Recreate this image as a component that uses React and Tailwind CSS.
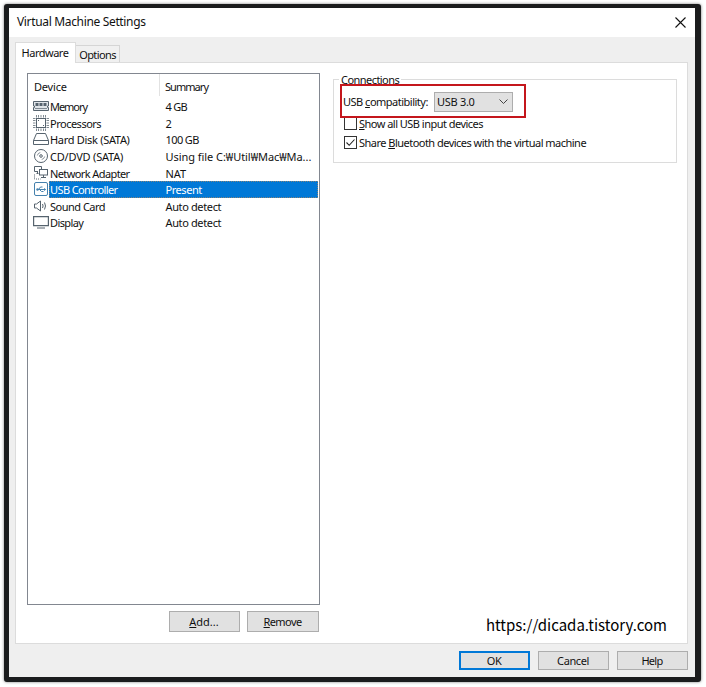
import { clsx } from "clsx";

const MemoryIcon = () => (
  <svg width="16" height="16" viewBox="0 0 16 16" fill="none" stroke="#56636e">
    <path d="M.5 3.500h15v4.500h-1v1.500h1v3H.5v-3h1V8h-1z" fill="#dfe4e8" />
    <path d="M2.500 5h3v3h-3zM6.500 5h3v3h-3zM10.500 5h3v3h-3z" fill="#56636e" stroke="none" />
    <path d="M2 10.500h12" strokeOpacity=".7" />
  </svg>
);

const ProcessorIcon = () => (
  <svg width="16" height="16" viewBox="0 0 16 16" fill="none" stroke="#56636e">
    <rect x="3.5" y="3.5" width="9" height="9" />
    <path d="M3.5 0v2.5M5.5 0v2.5M8 0v2.5M10.5 0v2.5M12.5 0v2.5M3.5 13.5V16M5.5 13.5V16M8 13.5V16M10.5 13.5V16M12.5 13.5V16" strokeOpacity=".75" />
    <path d="M0 3.5h2.5M0 5.5h2.5M0 8h2.5M0 10.5h2.5M0 12.5h2.5M13.5 3.5H16M13.5 5.5H16M13.5 8H16M13.5 10.5H16M13.5 12.5H16" strokeOpacity=".75" />
    <path d="M5 5.5h1M10 10.5h1" />
  </svg>
);

const DiskIcon = () => (
  <svg width="16" height="16" viewBox="0 0 16 16" fill="none" stroke="#56636e">
    <path d="M3.5 2.5h9l3 7v4H.5v-4zM.5 9.5h15" />
  </svg>
);

const DiscIcon = () => (
  <svg width="16" height="16" viewBox="0 0 16 16" fill="none" stroke="#56636e">
    <circle cx="8" cy="8" r="6.5" />
    <circle cx="8" cy="8" r="1.3" />
    <path d="M4.3 7.5a4 4 0 0 1 3-3M11.7 8.5a4 4 0 0 1-3 3" strokeOpacity=".7" />
  </svg>
);

const NetworkIcon = () => (
  <svg width="16" height="16" viewBox="0 0 16 16" fill="none" stroke="#56636e">
    <path d="M5 6.5H1.5v-5h7v2.5M3.5 8.5h2M4.5 6.5v2" />
    <rect x="6.5" y="4.5" width="8" height="5.5" fill="white" />
    <path d="M10.5 10v2.5M8 12.5h5" />
    <path d="M1.5 9.5v4.500h6" strokeDasharray="1 1" />
  </svg>
);

const UsbIcon = () => (
  <svg width="16" height="16" viewBox="0 0 16 16" fill="none" stroke="#4581ad">
    <rect x="1.5" y="1.5" width="13" height="13" rx="1.5" fill="white" />
    <path d="M4 8.5h8M5.5 8.5l2-2.5h2M6.5 8.5l2 2h2" />
    <path d="M11 7l2.2 1.5L11 10z" fill="#4581ad" stroke="none" />
    <circle cx="4.5" cy="8.5" r="1.2" fill="#4581ad" stroke="none" />
  </svg>
);

const SoundIcon = () => (
  <svg width="16" height="16" viewBox="0 0 16 16" fill="none" stroke="#56636e">
    <path d="M1.5 6h2L7.5 3v10l-4-3h-2zM9.5 6q1.2 2 0 4M11.5 4.5q2 3.5 0 7" />
  </svg>
);

const DisplayIcon = () => (
  <svg width="16" height="16" viewBox="0 0 16 16" fill="none" stroke="#56636e">
    <path d="M.6 2.6h14.800v9H.6z" strokeWidth="1.2" />
    <path d="M4 14h8" />
  </svg>
);

const CloseIcon = () => (
  <svg width="11" height="11" viewBox="0 0 11 11" fill="none" stroke="#111" strokeWidth="1.1">
    <path d="M.5.5l10 10M10.5.5l-10 10" />
  </svg>
);

const devices = [
  { name: "Memory", summary: "4 GB", icon: MemoryIcon, nameClass: "tracking-[-1.05px]", summaryClass: "tracking-[-0.7px]" },
  { name: "Processors", summary: "2", icon: ProcessorIcon, nameClass: "tracking-[-0.5px]" },
  { name: "Hard Disk (SATA)", summary: "100 GB", icon: DiskIcon, nameClass: "tracking-[-0.3px]", summaryClass: "tracking-[-0.6px]" },
  { name: "CD/DVD (SATA)", summary: "Using file C:₩Util₩Mac₩Ma...", icon: DiscIcon, nameClass: "tracking-[-0.2px]", summaryClass: "tracking-[-0.05px]" },
  { name: "Network Adapter", summary: "NAT", icon: NetworkIcon, nameClass: "tracking-[-0.6px]" },
  { name: "USB Controller", summary: "Present", icon: UsbIcon, nameClass: "tracking-[-0.6px]", summaryClass: "tracking-[-0.45px]", selected: true },
  { name: "Sound Card", summary: "Auto detect", icon: SoundIcon, nameClass: "tracking-[-0.5px]", summaryClass: "tracking-[-0.37px]" },
  { name: "Display", summary: "Auto detect", icon: DisplayIcon, nameClass: "tracking-[-0.6px]", summaryClass: "tracking-[-0.37px]" },
];

const DeviceRow = ({ device }) => {
  const Icon = device.icon;
  return (
    <div className="flex h-[16.6px] items-center">
      <div className="flex w-4 shrink-0 justify-center">
        <Icon />
      </div>
      <div
        className={clsx(
          "flex h-full w-[269px] items-center pt-px pl-px",
          device.selected && "bg-[#0078d7] text-white outline-1 -outline-offset-1 outline-dotted outline-[#e08a3c]/60"
        )}
      >
        <span className={clsx("w-[115.5px]", device.nameClass)}>{device.name}</span>
        <span className={device.summaryClass}>{device.summary}</span>
      </div>
    </div>
  );
};

const Button = ({ children, primary, className }) => (
  <button
    className={clsx(
      "flex items-center justify-center bg-[#e1e1e1] pr-px",
      primary ? "border-2 border-[#0078d7]" : "border border-[#adadad]",
      className
    )}
  >
    <span>{children}</span>
  </button>
);

const Key = ({ children }) => <span className="underline underline-offset-1">{children}</span>;

const Checkbox = ({ checked, children }) => (
  <div className="flex h-[19px] items-center tracking-[-0.52px]">
    <span className="mr-0.5 flex h-[13px] w-[13px] items-center justify-center border border-[#333] bg-white">
      {checked && (
        <svg width="11" height="11" viewBox="0 0 11 11" fill="none" stroke="#222" strokeWidth="1.1">
          <path d="M1.5 5.5l2.7 2.8L9.5 2.5" />
        </svg>
      )}
    </span>
    <span>{children}</span>
  </div>
);

export default function App() {
  return (
    <div className="h-[687px] w-[706px] bg-white pt-1 pl-1 font-['Noto_Sans','Noto_Sans_CJK_KR',sans-serif] text-[11px] leading-none whitespace-nowrap text-[#111]">
      <div className="flex h-[678px] w-[697px] flex-col rounded-[3px] border-t-4 border-r-6 border-b-[5px] border-l-5 border-[#1b1c1d] bg-[#efefef] shadow-[0_0_3px_#777]">
        <div className="flex h-[29px] shrink-0 items-center justify-between bg-white pr-[9px] pb-px pl-2">
          <span className="text-[12px] tracking-[-0.34px]">Virtual Machine Settings</span>
          <CloseIcon />
        </div>

        <div className="flex h-[25px] shrink-0 items-end pl-1.5">
          <div className="z-10 -mb-px flex h-[21px] w-[61px] items-center justify-center border border-b-0 border-[#dcdcdc] bg-white pr-px pb-0.5 tracking-[-0.5px]">
            Hardware
          </div>
          <div className="flex h-[17px] w-[44px] items-center justify-center border border-b-0 border-l-0 border-[#d5d5d5] bg-[#f0f0f0] tracking-[-0.6px]">
            Options
          </div>
        </div>

        <div className="ml-1.5 flex h-[582px] w-[673px] shrink-0 border border-[#dcdcdc] bg-white pt-2.5 pl-[11px]">
          <div className="w-[293px]">
            <div className="h-[532px] border border-[#828790]">
              <div className="flex h-[24px] items-center pt-px pl-1.5">
                <span className="w-[125px] tracking-[-0.2px]">Device</span>
                <span className="-mt-1 mr-[5px] h-[22px] w-px bg-[#e2e2e2]" />
                <span className="tracking-[-0.95px]">Summary</span>
              </div>
              <div className="pl-[5px]">
                {devices.map((device) => (
                  <DeviceRow key={device.name} device={device} />
                ))}
              </div>
            </div>
            <div className="mt-1.5 flex justify-end gap-[7px] pr-px">
              <Button className="h-[21px] w-[71px]">
                <Key>A</Key>dd...
              </Button>
              <Button className="h-[21px] w-[72px] tracking-[-0.6px]">
                <Key>R</Key>emove
              </Button>
            </div>
          </div>

          <div className="ml-[13px] flex w-[344px] flex-col justify-between pt-1.5 pb-[11px]">
            <div className="relative h-[84px] border border-[#dcdcdc] pl-2.5">
              <span className="relative -top-1.5 -ml-[5px] block h-[9px] w-fit bg-white px-0.5 tracking-[-0.55px]">
                Connections
              </span>
              <div className="flex h-[25px] items-center">
                <span className="-ml-px w-[91px] tracking-[-0.5px]">
                  USB <Key>c</Key>ompatibility:
                </span>
                <div className="flex h-[20px] w-[79px] items-center justify-between border border-[#adadad] bg-[#e1e1e1] pr-1 pl-0.5">
                  <span className="tracking-[-0.3px]">USB 3.0</span>
                  <svg width="9" height="6" viewBox="0 0 9 6" fill="none" stroke="#444">
                    <path d="M.5.5l4 4 4-4" />
                  </svg>
                </div>
              </div>
              <Checkbox>
                <Key>S</Key>how all USB input devices
              </Checkbox>
              <Checkbox checked>
                Share <Key>B</Key>luetooth devices with the virtual machine
              </Checkbox>
              <div className="absolute top-1 left-1.5 h-[34px] w-[186px] border-2 border-[#c4161c]" />
            </div>
            <span className="self-end pr-2.5 font-['Noto_Sans_CJK_KR',sans-serif] text-[15px] text-black">
              https://dicada.tistory.com
            </span>
          </div>
        </div>

        <div className="flex justify-end gap-2 pt-[7px] pr-[7px]">
          <Button primary className="h-[19px] w-[71px] tracking-[-0.5px]">OK</Button>
          <Button className="h-[19px] w-[71px] tracking-[-0.4px]">Cancel</Button>
          <Button className="h-[19px] w-[71px] tracking-[-0.7px]">Help</Button>
        </div>
      </div>
    </div>
  );
}
